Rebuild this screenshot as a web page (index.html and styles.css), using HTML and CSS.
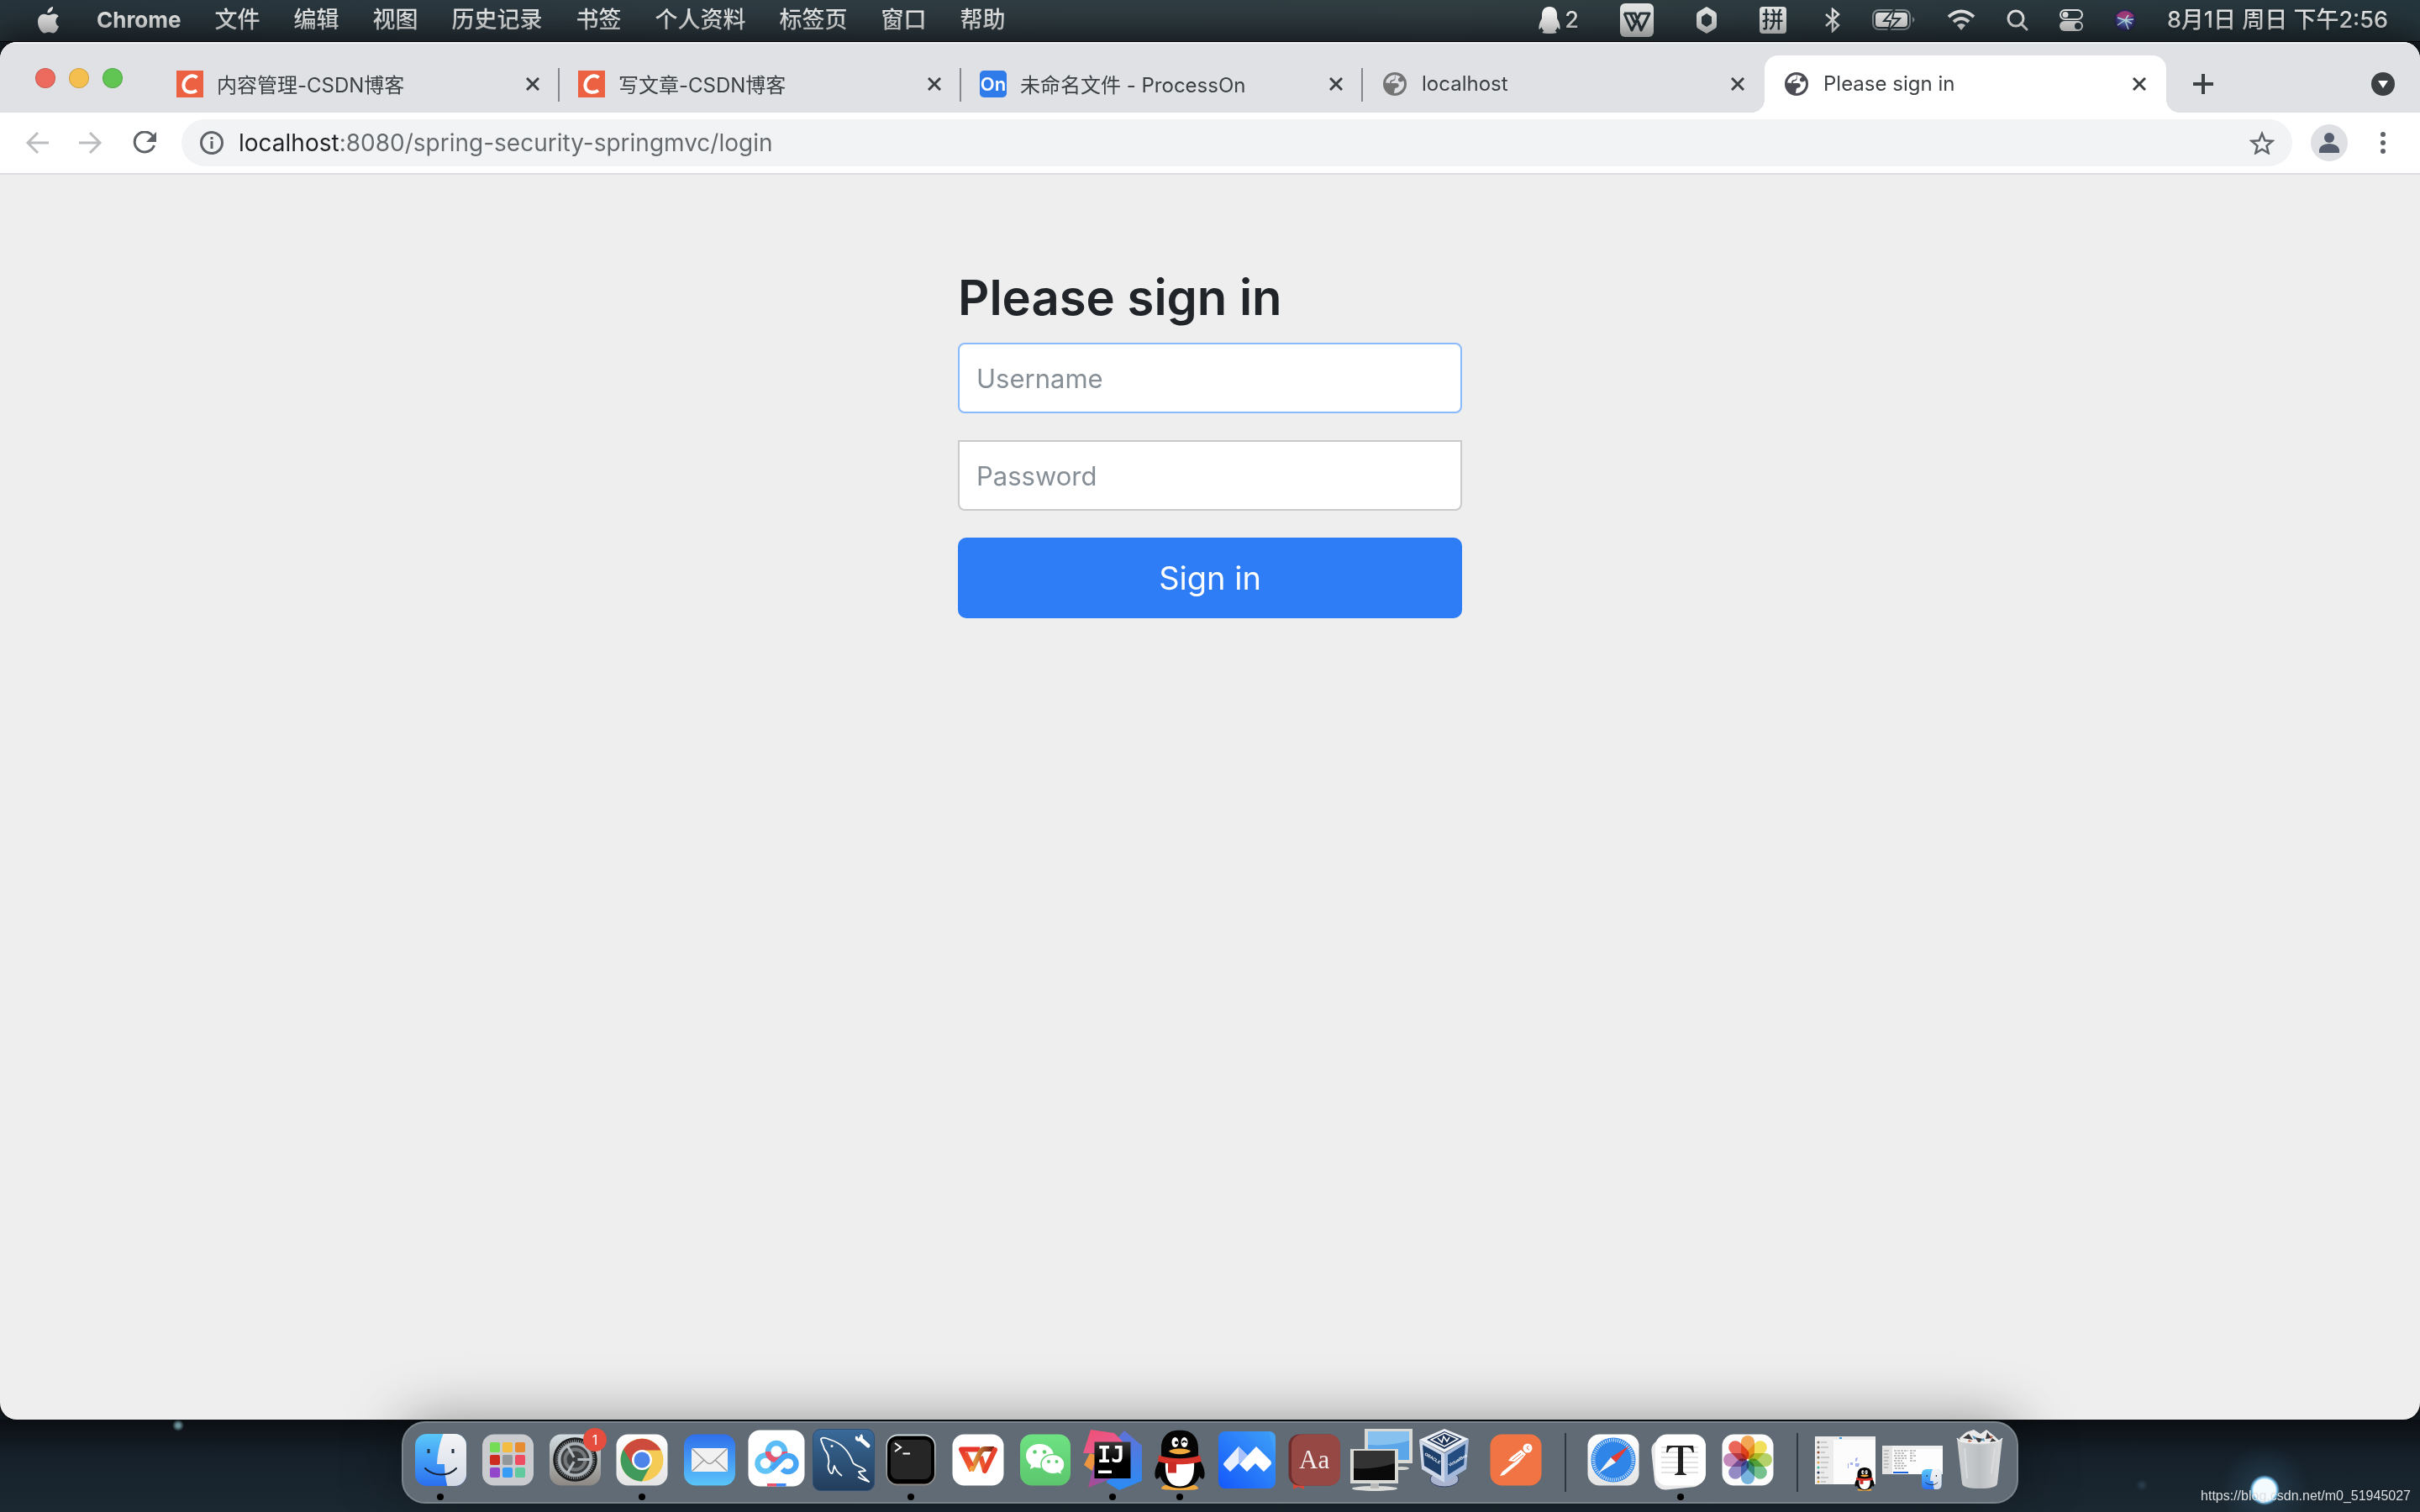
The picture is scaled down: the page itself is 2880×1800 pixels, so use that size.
FILE: index.html
```html
<!DOCTYPE html>
<html lang="zh-CN">
<head>
    <meta charset="UTF-8">
    <meta name="viewport" content="width=device-width, initial-scale=1.0">
    <title>Please sign in</title>
    <link rel="stylesheet" href="styles.css">
</head>
<body>

    <!-- Shared shapes and gradients -->
    <svg class="defs" width="0" height="0" aria-hidden="true">
        <defs>
            <linearGradient id="g-sky" x2="0" y2="1"><stop stop-color="#5ac8fa"/><stop offset="1" stop-color="#2a6ff0"/></linearGradient>
            <linearGradient id="g-mail" x2="0" y2="1"><stop stop-color="#2f6fec"/><stop offset="1" stop-color="#5ac5fa"/></linearGradient>
            <linearGradient id="g-face" x2="0" y2="1"><stop stop-color="#f4f4f6"/><stop offset="1" stop-color="#d3dae6"/></linearGradient>
            <linearGradient id="g-gray" x2="0" y2="1"><stop stop-color="#d2dde2"/><stop offset="1" stop-color="#8d8883"/></linearGradient>
            <linearGradient id="g-white" x2="0" y2="1"><stop stop-color="#ffffff"/><stop offset="1" stop-color="#e4e4e4"/></linearGradient>
            <linearGradient id="g-sql" x2="0" y2="1"><stop stop-color="#3a6a99"/><stop offset="1" stop-color="#223d5a"/></linearGradient>
            <linearGradient id="g-green" x2="0" y2="1"><stop stop-color="#6ee283"/><stop offset="1" stop-color="#5cc66d"/></linearGradient>
            <linearGradient id="g-wps" x2="0" y2="1"><stop stop-color="#e6352b"/><stop offset="1" stop-color="#f2692c"/></linearGradient>
            <linearGradient id="g-fold" x2="1" y2="0"><stop stop-color="#f5a742"/><stop offset="1" stop-color="#6e1613"/></linearGradient>
            <linearGradient id="g-blue" x1="0" y1="1" x2="1" y2="0"><stop stop-color="#1458fb"/><stop offset="1" stop-color="#3ea0f7"/></linearGradient>
            <linearGradient id="g-pink" x2="1" y2="1"><stop stop-color="#ef4f74"/><stop offset="1" stop-color="#e8609a"/></linearGradient>
            <linearGradient id="g-violet" x1="0" y1="1" x2="1" y2="0"><stop stop-color="#b14a8e"/><stop offset="1" stop-color="#6c61c9"/></linearGradient>
            <linearGradient id="g-ijblue" x2="0" y2="1"><stop stop-color="#5f72d8"/><stop offset="1" stop-color="#2a8cf5"/></linearGradient>
            <linearGradient id="g-black" x2="0" y2="1"><stop stop-color="#3a3a3a"/><stop offset=".5" stop-color="#000000"/></linearGradient>
            <linearGradient id="g-bin" x2="1" y2="0"><stop stop-color="#d8dadb"/><stop offset=".5" stop-color="#c3c5c7"/><stop offset="1" stop-color="#e4e5e6"/></linearGradient>
            <radialGradient id="g-siri"><stop stop-color="#6fb7e0"/><stop offset=".5" stop-color="#4a55a8"/><stop offset="1" stop-color="#27234f"/></radialGradient>
        </defs>

        <symbol id="close" viewBox="0 0 16 16"><path d="M1 1 15 15M15 1 1 15" stroke="#3c4043" stroke-width="3"/></symbol>

        <symbol id="globe" viewBox="0 0 28 28">
            <circle cx="14" cy="14" r="14" fill="currentColor"/>
            <path d="M8 13.500c0-3 .6-4.300 3.500-4.500 2.500-.2 2.500-2.200 2.300-3.500L14 3a11 11 0 0 0-11 9.500l4 .2z" fill="var(--tab)"/>
            <path d="M2.800 14.500A11.300 11.300 0 0 0 12 25v-2.500c-2 0-3-1-3-2.800 0-1.200.6-2.100 2-2.700z" fill="currentColor"/>
            <path d="M14.500 3v4.500c0 1.500-.6 2.500-2.600 3-1.700.4-2.200 1-2.200 2.500h6c2 0 3 .9 3 2.700 0 1.600-1 2.600-2.900 2.800-1.500.2-2 1-2.200 2.600L13 25c6.700 0 12-5 12-11 0-1.500-.3-3-.9-4.200-1.200 1.600-3.300 2.300-5 1.200-1.700-1-1.600-2.700-.3-4l1.900-2z" fill="var(--tab)"/>
        </symbol>

        <symbol id="csdn" viewBox="0 0 32 32">
            <path fill="#ec6142" d="M0 0h32v32H0z"/>
            <path d="M24.500 8.500C22 6 18.500 5.600 15 7.200 9 10 7 17.500 9.500 22c2.500 4.500 9.500 5 14.500 1.600" fill="none" stroke="#fff" stroke-width="4"/>
        </symbol>

        <symbol id="finder" viewBox="0 0 62 62">
            <clipPath id="finder-clip"><rect width="61" height="62" rx="14"/></clipPath>
            <g clip-path="url(#finder-clip)">
                <path fill="url(#g-sky)" d="M0 0h62v62H0z"/>
                <path fill="url(#g-face)" d="M33.500 0C29 11 26.500 24 26 36h9c0 8 1 17 3.300 26H62V0z"/>
                <path d="M16 18v5M45 18v5" stroke="#233140" stroke-width="3"/>
                <path d="M12 41c10 10 28 10 37 0" fill="none" stroke="#152030" stroke-width="2" stroke-linecap="round"/>
            </g>
        </symbol>

        <symbol id="qq" viewBox="0 0 60 72">
            <path d="M6 36C0 45-1 54 2 58c2 1 5-3 7-6M54 36c6 9 7 18 4 22-2 1-5-3-7-6" fill="#050505"/>
            <path d="M8 70c0-5 9-6 15-5h14c7-1 15 0 15 5-4 2-38 2-44 0z" fill="#f0a83c"/>
            <path d="M30 0C15 0 8 9 8 22v9c-3 7-4 14-2 22 3 11 11 16 24 16s21-5 24-16c2-8 1-15-2-22v-9C52 9 45 0 30 0z" fill="#050505"/>
            <path d="M13 38c-1 18 4 29 17 29s18-11 17-29z" fill="#fff"/>
            <path d="M5 30c16 5 34 5 49 0l2 7c-14 5-38 5-52 0z" fill="#d6342a"/>
            <path d="M16 38h10v13H16z" fill="#c92b25"/>
            <ellipse cx="24.500" cy="14.500" rx="4" ry="6" fill="#fff"/><ellipse cx="35.500" cy="14.500" rx="4" ry="6" fill="#fff"/>
            <circle cx="26" cy="15" r="2"/><path d="M33 15c2-3 4-2 5 0" fill="none" stroke="#050505" stroke-width="2"/>
            <path d="M17 25c5-4 21-4 26 0-5 5-21 5-26 0z" fill="#f0a83c"/>
        </symbol>
    </svg>

    <header class="menubar">
        <nav class="menus">
            <button class="menu apple" aria-label="Apple">
                <svg width="28" height="34" viewBox="0 0 28 34"><path fill="#eee" d="M19 1c.3 4-3 7.500-6.500 7.500C12 5 15.300 1.500 19 1zM26 24.500c-2 5-4.500 8-7 8-1.800 0-2.500-1.200-4.900-1.200s-3.300 1.200-5 1.200C5.300 32.500 1 25 1 19c0-6 3.700-9.300 7.500-9.300 2.300 0 4 1.400 5.800 1.400 1.700 0 3.500-1.500 6.200-1.500 2 0 4 1 5.200 2.800-4.800 2.900-4.200 9.900.3 12.100z"/></svg>
            </button>
            <button class="menu app-name">Chrome</button>
            <button class="menu">文件</button>
            <button class="menu">编辑</button>
            <button class="menu">视图</button>
            <button class="menu">历史记录</button>
            <button class="menu">书签</button>
            <button class="menu">个人资料</button>
            <button class="menu">标签页</button>
            <button class="menu">窗口</button>
            <button class="menu">帮助</button>
        </nav>
        <div class="status">
            <span class="qq-status">
                <svg width="28" height="34" viewBox="0 0 28 34"><path fill="#fff" d="M14 1C8 1 5 5 5 11v4c-3 5-4 9-3.500 13 1 0 2-1 3-3 .6 2 1.500 3.500 3 4.800-1 .5-2 1-2 2.200 3 1.300 14 1.300 17 0 0-1.200-1-1.700-2-2.200 1.500-1.300 2.400-2.800 3-4.800 1 2 2 3 3 3C27 24 26 20 23 15v-4C23 5 20 1 14 1z"/></svg>2</span>
            <svg width="40" height="40" viewBox="0 0 40 40"><rect width="40" height="40" rx="6" fill="#e9ebeb"/><path d="M5 12h13l7 20 10-20H24L14 32 5 12M12 12l7 14M20 18l5 12" fill="none" stroke="#2b383d" stroke-width="3" stroke-linejoin="round"/></svg>
            <svg width="24" height="32" viewBox="0 0 24 32"><path fill="#e9ebeb" fill-rule="evenodd" d="M12 0 22 6q2 1 2 4v12q0 3-2 4L12 32 2 26q-2-1-2-4V10q0-3 2-4zM12 8 6 12v8l6 4 6-4v-8z"/></svg>
            <span class="ime">拼</span>
            <svg width="20" height="30" viewBox="0 0 20 30"><path d="M2 8 17 21 10 28V2l7 6L2 22" fill="none" stroke="#eee" stroke-width="2.500"/></svg>
            <svg width="52" height="26" viewBox="0 0 52 26"><rect x="1" y="1" width="44" height="23" rx="7" fill="none" stroke="#8c9699" stroke-width="2"/><rect x="4" y="4" width="38" height="17" rx="4" fill="#eee"/><path d="M48 9q5 3.500 0 7z" fill="#8c9699"/><path d="m27-1-13 15h8l-3 12L33 11h-9z" fill="#eee" stroke="#2c3a40" stroke-width="2"/></svg>
            <svg width="34" height="26" viewBox="0 0 34 26"><g fill="none" stroke="#eee" stroke-width="4"><path d="M2 9q15-13 30 0"/><path d="M8 15q9-8 18 0"/></g><path d="m17 25-5-6q5-4 10 0z" fill="#eee"/></svg>
            <svg width="26" height="26" viewBox="0 0 26 26"><circle cx="11" cy="11" r="9" fill="none" stroke="#eee" stroke-width="3"/><path d="m17 17 7 7" stroke="#eee" stroke-width="3" stroke-linecap="round"/></svg>
            <svg width="28" height="28" viewBox="0 0 28 28"><rect x="1" y="2" width="26" height="11" rx="5.500" fill="none" stroke="#eee" stroke-width="2"/><circle cx="7" cy="7.500" r="3.500" fill="#eee"/><rect y="15" width="28" height="12" rx="6" fill="#eee"/><circle cx="22" cy="21" r="4" fill="#2b3a41"/></svg>
            <svg width="26" height="26" viewBox="0 0 26 26"><circle cx="13" cy="13" r="13" fill="url(#g-siri)"/><path d="M2 8Q13-4 24 8L13 12z" fill="#c33d7d" opacity=".8"/><path d="M13 13 4 10M13 13l10-1M13 13l4 11M13 13l-9 6M13 13l4-6M13 13l8 4" stroke="#d5f5fa" stroke-width="1.500"/></svg>
            <time class="clock">8月1日 周日 下午2:56</time>
        </div>
    </header>

    <main class="window">
        <div class="tab-strip">
            <div class="window-controls">
                <button class="circle red" aria-label="关闭"></button>
                <button class="circle yellow" aria-label="最小化"></button>
                <button class="circle green" aria-label="缩放"></button>
            </div>
            <div class="tab">
                <svg class="favicon"><use href="#csdn"/></svg>
                <span class="tab-title">内容管理-CSDN博客</span>
                <button class="close-btn" aria-label="关闭标签页"><svg width="16" height="16"><use href="#close"/></svg></button>
            </div>
            <div class="tab">
                <svg class="favicon"><use href="#csdn"/></svg>
                <span class="tab-title">写文章-CSDN博客</span>
                <button class="close-btn" aria-label="关闭标签页"><svg width="16" height="16"><use href="#close"/></svg></button>
            </div>
            <div class="tab">
                <span class="favicon on-icon">On</span>
                <span class="tab-title">未命名文件 - ProcessOn</span>
                <button class="close-btn" aria-label="关闭标签页"><svg width="16" height="16"><use href="#close"/></svg></button>
            </div>
            <div class="tab last">
                <span class="favicon"><svg width="28" height="28"><use href="#globe"/></svg></span>
                <span class="tab-title">localhost</span>
                <button class="close-btn" aria-label="关闭标签页"><svg width="16" height="16"><use href="#close"/></svg></button>
            </div>
            <div class="tab active">
                <span class="favicon"><svg width="28" height="28"><use href="#globe"/></svg></span>
                <span class="tab-title">Please sign in</span>
                <button class="close-btn" aria-label="关闭标签页"><svg width="16" height="16"><use href="#close"/></svg></button>
            </div>
            <button class="new-tab" aria-label="新标签页"><svg width="24" height="24"><path d="M12 0v24M0 12h24" stroke="#3c4043" stroke-width="4"/></svg></button>
            <button class="tab-search" aria-label="搜索标签页"><svg width="28" height="28"><circle cx="14" cy="14" r="14" fill="#3c4043"/><path d="M8 10h12l-6 9z" fill="#fff"/></svg></button>
        </div>

        <div class="toolbar">
            <button class="tool" aria-label="后退"><svg width="28" height="28"><path d="M28 14H3M15 2 3 14l12 12" fill="none" stroke="#babcbe" stroke-width="3"/></svg></button>
            <button class="tool" aria-label="前进"><svg width="28" height="28"><path d="M0 14h25M13 2l12 12-12 12" fill="none" stroke="#babcbe" stroke-width="3"/></svg></button>
            <button class="tool" aria-label="刷新"><svg width="28" height="28"><path d="M24 6A12 12 0 1 0 25.500 17" fill="none" stroke="#5f6368" stroke-width="3"/><path d="M28 1v12H16z" fill="#5f6368"/></svg></button>
            <div class="omnibox">
                <svg width="28" height="28"><circle cx="14" cy="14" r="12.500" fill="none" stroke="#5f6368" stroke-width="3"/><path d="M14 7v3M14 12v9" stroke="#5f6368" stroke-width="3"/></svg>
                <input class="url" type="text" aria-label="地址" value="localhost:8080/spring-security-springmvc/login">
                <button class="star" aria-label="添加书签"><svg width="30" height="28" viewBox="0 0 30 28"><path d="m15 3 3.400 8.200 8.800.7-6.700 5.700 2.100 8.600L15 21.600l-7.600 4.600 2.100-8.600-6.700-5.700 8.800-.7z" fill="none" stroke="#5f6368" stroke-width="2.500"/></svg></button>
            </div>
            <button class="avatar" aria-label="个人资料"><svg width="44" height="44"><circle cx="22" cy="22" r="22" fill="#dee0e4"/><circle cx="22" cy="16" r="6" fill="#555d6e"/><path d="M10 34v-4q1-6 12-7 11 1 12 7v4z" fill="#555d6e"/></svg></button>
            <button class="more" aria-label="更多"><svg width="8" height="28"><g fill="#5f6368"><circle cx="4" cy="4" r="3"/><circle cx="4" cy="14" r="3"/><circle cx="4" cy="24" r="3"/></g></svg></button>
        </div>

        <section class="page">
            <form class="form-signin">
                <h2>Please sign in</h2>
                <input id="username" class="form-control focused" type="text" placeholder="Username" aria-label="Username">
                <input id="password" class="form-control" type="password" placeholder="Password" aria-label="Password">
                <button class="btn-primary" type="button">Sign in</button>
            </form>
        </section>
    </main>

    <footer class="desktop">
        <div class="dock">
            <button class="app running" aria-label="访达"><svg viewBox="0 0 80 98"><use href="#finder" x="10" y="15" width="62" height="62"/></svg></button>

            <button class="app" aria-label="启动台"><svg viewBox="0 0 80 98">
                <rect x="10" y="15.500" width="61" height="61" rx="14" fill="#c9cbcf"/>
                <rect x="19" y="25" width="12" height="12" rx="2" fill="#74dc55"/><rect x="34" y="25" width="12" height="12" rx="2" fill="#f3bd41"/><rect x="49" y="25" width="12" height="12" rx="2" fill="#e88c32"/>
                <rect x="19" y="40" width="12" height="12" rx="2" fill="#cc2c20"/><rect x="34" y="40" width="12" height="12" rx="2" fill="#929799"/><rect x="49" y="40" width="12" height="12" rx="2" fill="#ed4c61"/>
                <rect x="19" y="55" width="12" height="12" rx="2" fill="#9348cb"/><rect x="34" y="55" width="12" height="12" rx="2" fill="#369cf5"/><rect x="49" y="55" width="12" height="12" rx="2" fill="#60c99d"/>
            </svg></button>

            <button class="app" aria-label="系统偏好设置"><svg viewBox="0 0 80 98">
                <rect x="10" y="15.500" width="61" height="61" rx="14" fill="url(#g-gray)"/>
                <circle cx="40.500" cy="45.500" r="25" fill="#8e9396" stroke="#1c1d1e" stroke-width="2.500"/>
                <circle cx="40.500" cy="45.500" r="22.500" fill="none" stroke="#1c1d1e" stroke-width="3" stroke-dasharray="1.500 1"/>
                <circle cx="40.500" cy="45.500" r="18.500" fill="#3c3e40" stroke="#aeb5ba" stroke-width="3"/>
                <circle cx="40.500" cy="45.500" r="12" fill="none" stroke="#74787b" stroke-width="4"/>
                <path d="M40.500 45.500h18M40.500 45.500l-9-16M40.500 45.500l-9 16" stroke="#b4bbc0" stroke-width="3"/>
                <circle cx="40.500" cy="45.500" r="3" fill="#3a3b3c"/>
            </svg><span class="badge">1</span></button>

            <button class="app running" aria-label="Chrome"><svg viewBox="0 0 80 98">
                <rect x="9.500" y="15.500" width="61" height="61" rx="14" fill="url(#g-white)"/>
                <circle cx="40" cy="46" r="25.500" fill="#f6cb55"/>
                <path d="M40 46 18 33.300A25.500 25.500 0 0 0 40 71.500L51 51z" fill="#3f9a5c"/>
                <path d="M40 46 29 52.500 18 33.300A25.500 25.500 0 0 1 62.500 34.500H40z" fill="#cc4b3d"/>
                <circle cx="40" cy="46" r="12" fill="#fff"/><circle cx="40" cy="46" r="9.500" fill="#4d84ea"/>
            </svg></button>

            <button class="app" aria-label="邮件"><svg viewBox="0 0 80 98">
                <rect x="10" y="15.500" width="61" height="61" rx="14" fill="url(#g-mail)"/>
                <rect x="19" y="32" width="43" height="28" rx="2" fill="#f1f1f1"/>
                <path d="m20 59 14-13M61 59 47 46M20 33l17 16q3.500 3 7 0l17-16" fill="none" stroke="#999" stroke-width="1.500"/>
            </svg></button>

            <button class="app" aria-label="百度网盘"><svg viewBox="0 0 80 98">
                <rect x="6.500" y="10.500" width="67" height="67" rx="14" fill="#fff"/>
                <g fill="none" stroke-width="6.500"><circle cx="27" cy="50" r="9.500" stroke="#5fc3f5"/><circle cx="40" cy="36" r="10" stroke="#5cbcf5"/><path d="M30 36a10 10 0 0 0 20 0" stroke="#e9546d"/><path d="M34 57 47 44a9.500 9.500 0 1 1 0 13" stroke="#47a5f6"/></g>
                <path fill="#e9546d" d="M29 74h11v3.500H29z"/><path fill="#3d86f5" d="M40 74h11.500v3.500H40z"/>
            </svg></button>

            <button class="app" aria-label="MySQL Workbench"><svg viewBox="0 0 80 98">
                <rect x="3.500" y="9.500" width="73" height="73" rx="9" fill="url(#g-sql)" stroke="#2c5079"/>
                <path d="M22 45c2 6-3 7 1 14 1 3 3 4 4 2 1-4 1-6 2-8 2 6 4 8 9 12M22 45c0-8-3-8-5-12-1-5-4-8-4-12 2-3 7-1 11 1 14 4 22 13 27 27 1 4 13 5 15 10-3 1-6 0-8 1 2 4 8 8 12 12-4-2-9-3-13-6" fill="none" stroke="#fff" stroke-width="1.800" stroke-linejoin="round"/>
                <circle cx="26" cy="29.500" r="1.500" fill="#fff"/>
                <path d="m60 21 9 8" stroke="#fff" stroke-width="5" stroke-linecap="round"/><path d="M55.500 18q-1 5 3.500 4 4-2 1.500-6" fill="none" stroke="#fff" stroke-width="3"/>
            </svg></button>

            <button class="app running" aria-label="终端"><svg viewBox="0 0 80 98">
                <rect x="10.500" y="15.500" width="59" height="61" rx="14" fill="url(#g-gray)"/>
                <rect x="12" y="17.500" width="56" height="57" rx="12" fill="#000"/><rect x="16" y="22" width="48" height="47" rx="8" fill="#262626"/>
                <path d="m21 26 7 5-7 5M30.500 38.500H39" fill="none" stroke="#fff" stroke-width="2"/>
            </svg></button>

            <button class="app" aria-label="WPS"><svg viewBox="0 0 80 98">
                <rect x="9.500" y="15.500" width="61" height="61" rx="14" fill="#fff"/>
                <path d="M42 33.500H20L32.500 59M43 42l5 17" fill="none" stroke="url(#g-wps)" stroke-width="6" stroke-linejoin="round"/>
                <path d="m32 59 11-23q2-3 5-3h11" fill="none" stroke="url(#g-fold)" stroke-width="6"/>
                <path d="m26 37 8 16" stroke="#ec5030" stroke-width="3"/>
                <path d="m48 59 12-25" stroke="#e6412b" stroke-width="6" stroke-linecap="round"/>
            </svg></button>

            <button class="app" aria-label="微信"><svg viewBox="0 0 80 98">
                <rect x="10" y="15.500" width="60" height="61" rx="14" fill="url(#g-green)"/>
                <path d="M33 27c9.500 0 17 6 17 14s-7.500 14.500-17 14.500q-3 0-6-1l-5 2.500 1-5q-6-4-6-11c0-8 7-14 16-14z" fill="#fff"/>
                <path d="M49 39.500c8 0 14 5 14 11.700q0 5.300-4 8.500l1 4-5-2q-3 1-6 1c-8 0-14-5-14-11.500s6-11.700 14-11.700z" fill="#fff" stroke="#63d075" stroke-width="1.500"/>
                <g fill="#5fcc70"><circle cx="27.500" cy="36.500" r="2.300"/><circle cx="39" cy="36.500" r="2.300"/><circle cx="44" cy="48" r="2"/><circle cx="53.500" cy="48" r="2"/></g>
            </svg></button>

            <button class="app running" aria-label="IntelliJ IDEA"><svg viewBox="0 0 80 98">
                <path d="m54 11 21 18v42L48 82 33 73l2-40z" fill="url(#g-ijblue)"/>
                <path d="m14 10 28 4 17 17-41 7H5z" fill="url(#g-pink)"/><path d="m13 38-7 14 14 10V40z" fill="#ed9440"/><path d="m18 51-7 28 36-14z" fill="url(#g-violet)"/>
                <path fill="url(#g-black)" d="M18.500 24.500h43V68h-43z"/><path fill="#fff" d="M23 58.500h16V62H23z"/>
                <text x="22" y="49" class="ij">IJ</text>
            </svg></button>

            <button class="app running" aria-label="QQ"><svg viewBox="0 0 80 98"><use href="#qq" x="10" y="10.500" width="60" height="72"/></svg></button>

            <button class="app" aria-label="腾讯会议"><svg viewBox="0 0 80 98">
                <rect x="6" y="12" width="68" height="68" rx="8" fill="url(#g-blue)"/><path d="M74 40V20q0-8-8-8Z" fill="#49a8f7" opacity=".5"/>
                <path d="m30 30 10 10-20 20-7-7q-2-2 0-4z" fill="#e9effd"/><path d="m30 30 11 11-11 10z" fill="#a9c2fb"/>
                <path d="m51 30 17 17q2 3 0 5l-8 8-10-10-10 10-9-9z" fill="#fff"/>
            </svg></button>

            <button class="app" aria-label="词典"><svg viewBox="0 0 80 98">
                <path d="M15 70v11l6-3 7 3V70z" fill="#d4483a"/><rect x="9.500" y="15.500" width="60" height="61" rx="13" fill="#6f2e2e"/><rect x="13" y="15.500" width="58" height="61" rx="13" fill="#964845"/>
                <text x="22" y="56" class="aa">Aa</text>
            </svg></button>

            <button class="app" aria-label="屏幕共享"><svg viewBox="0 0 80 98">
                <ellipse cx="64" cy="56" rx="9" ry="2" fill="#d5d5d2"/>
                <path fill="#d9dad6" d="M20 9h57v41H20z"/><path fill="#5ba6e8" d="M24 12h49v34H24z"/><path fill="#a3d4f4" d="M24 12h49v11Q50 30 24 28z" opacity=".6"/>
                <ellipse cx="32" cy="80" rx="27" ry="3" fill="#dcddda"/><path fill="#b9bab7" d="M27 72h10v8H27z"/>
                <path fill="#d9dad6" d="M3 33h57v41H3z"/><path fill="#0a0a0a" d="M7 35h49v35H7z"/><path fill="#333" d="M7 35h49v15Q30 58 7 56z"/>
            </svg></button>

            <button class="app" aria-label="VirtualBox"><svg viewBox="0 0 80 98">
                <ellipse cx="35" cy="69" rx="17" ry="9" fill="#aab4ce" stroke="#34466e"/>
                <path d="m35 9 29 12-29 16L5 22z" fill="#edf0f5"/><path d="M5 22l30 16v35L8 57z" fill="#ced8e8"/><path d="M64 21 35 38v35l26-16z" fill="#a4b8da"/>
                <path d="m35 12 21 9-21 12-21-11z" fill="#1d3358"/><path d="m9 28 22 12v25L11 53z" fill="#1d3f6a"/><path d="M60 27 39 40v24l19-12z" fill="#234d80"/>
                <path d="m35 14 16 7-16 9-16-8zM27 20l5 5 2-7 4 6 3-5" fill="none" stroke="#fff" stroke-width="1.500"/>
                <text x="0" y="0" class="vb" transform="translate(11 40) rotate(31)">ORACLE</text><text x="0" y="0" class="vb" transform="translate(41 54) rotate(-30)">VirtualBox</text>
            </svg></button>

            <button class="app" aria-label="Postman"><svg viewBox="0 0 80 98">
                <rect x="9.500" y="15.500" width="61" height="61" rx="14" fill="#f07444"/>
                <circle cx="54" cy="32" r="5.500" fill="#fff"/><path d="m46 34 6 5-9 11-17 14-5 1 3-5 15-12-8-1 3-4z" fill="#fff"/><path d="m36 46 10-8M38 49l11-9M55 29l-2 3 3 2" fill="none" stroke="#f07444"/>
            </svg></button>

            <span class="divider"></span>

            <button class="app" aria-label="Safari"><svg viewBox="0 0 80 98">
                <rect x="9.500" y="15.500" width="61" height="61" rx="14" fill="url(#g-white)"/><circle cx="40" cy="46" r="26.500" fill="#2f86e8"/>
                <circle cx="40" cy="46" r="23.500" fill="none" stroke="#d5e9fb" stroke-width="4" stroke-dasharray="1 1.500"/>
                <path d="m59 29-16 20-6-6z" fill="#e43d36"/><path d="m22 62 15-19 6 6z" fill="#f3f3f3"/>
            </svg></button>

            <button class="app running" aria-label="Typora"><svg viewBox="0 0 80 98">
                <rect x="7" y="20" width="58" height="60" rx="13" fill="#e9e9e9" transform="rotate(-6 36 50)"/><rect x="10" y="15.500" width="60" height="61" rx="14" fill="#fff"/>
                <path d="M17 31h44M17 37h44M17 43h44M17 49h44M17 55h44M17 61h44" stroke="#e3e3e3" stroke-width="2"/>
                <path d="M24 29h31l1 8h-2c-1-4-3-6-7-6h-4v28c0 3 2 3 4 4v1H33v-1c2-1 4-1 4-4V31h-5c-4 0-6 2-7 6h-2z" fill="#222"/>
            </svg></button>

            <button class="app" aria-label="照片"><svg viewBox="0 0 80 98">
                <rect x="9.500" y="15.500" width="61" height="61" rx="14" fill="#fcfcfc"/>
                <g class="petals"><rect x="32" y="17" width="16" height="28" rx="8" fill="#f29a36"/><rect x="32" y="17" width="16" height="28" rx="8" fill="#f2dc3d" transform="rotate(45 40 46)"/><rect x="32" y="17" width="16" height="28" rx="8" fill="#aacd50" transform="rotate(90 40 46)"/><rect x="32" y="17" width="16" height="28" rx="8" fill="#5eba7b" transform="rotate(135 40 46)"/><rect x="32" y="17" width="16" height="28" rx="8" fill="#60a8da" transform="rotate(180 40 46)"/><rect x="32" y="17" width="16" height="28" rx="8" fill="#8379bf" transform="rotate(225 40 46)"/><rect x="32" y="17" width="16" height="28" rx="8" fill="#bd77b2" transform="rotate(270 40 46)"/><rect x="32" y="17" width="16" height="28" rx="8" fill="#ea4c3d" transform="rotate(315 40 46)"/></g>
            </svg></button>

            <span class="divider"></span>

            <button class="app" aria-label="QQ 窗口"><svg viewBox="0 0 80 98">
                <path fill="#fcfcfc" d="M4 18h72v57H4z"/><path fill="#ececec" d="M4 18h72v4H4zM5 22h21v53H5z"/>
                <g fill="#84776f"><circle cx="8" cy="25" r="1.500"/><circle cx="8" cy="31" r="1.500"/><circle cx="8" cy="37" r="1.500" fill="#9b4b31"/><circle cx="8" cy="43" r="1.500"/><circle cx="8" cy="49" r="1.500" fill="#dba453"/><circle cx="8" cy="55" r="1.500" fill="#43b899"/><circle cx="8" cy="61" r="1.500" fill="#26355a"/><circle cx="8" cy="67" r="1.500"/><circle cx="8" cy="72" r="1.500" fill="#e5a63f"/></g>
                <path d="M11 25h7M11 31h9M11 37h5M11 43h10M11 49h9M11 55h8M11 61h4M11 67h9M11 72h6" stroke="#a8a8a8"/>
                <path d="m52 44 3-1-1 4-2 1zM52 50h5l-1 4h-4zM46 49h3v3h-3zM43 50h1v6h-1z" fill="#a6b1ea"/><path d="M33 20h3" stroke="#3497e3" stroke-width="2"/>
                <use href="#qq" x="51" y="55" width="24" height="28"/>
            </svg></button>

            <button class="app" aria-label="访达窗口"><svg viewBox="0 0 80 98">
                <path fill="#fdfdfd" d="M4 29h72v34H4z"/><path fill="#e4e4e4" d="M4 29h12v34H4z"/><path fill="#f1f1f1" d="M16 29h60v4H16z"/>
                <path d="M18 35h17M19 38h11M18 41h16M19 44h14M18 47h10M19 50h12M18 53h15M19 56h12M37 35h8M37 38h5M37 41h8M37 44h4M37 47h7" stroke="#888" stroke-dasharray="3 1"/>
                <path d="M6 35h6M6 39h5M6 43h6M6 47h5M6 51h6M6 55h5" stroke="#999"/><path fill="#1d61d9" d="M17 60h18v2H17z"/>
                <use href="#finder" x="51" y="57" width="24" height="24"/>
            </svg></button>

            <button class="app" aria-label="废纸篓"><svg viewBox="0 0 80 98">
                <path d="m16 20 8-7 9-3 8 5 7-5 10 8 6 6-24 5-23-4z" fill="#e9e9e9"/><path d="m20 20 7-5 5 7zM34 19l5 7 5-5zM49 13l5 7-7 1zM55 20l5 4-8 1z" fill="#3b3b3f"/><path d="m31 17 5 2-2 3zM41 22l4-2 1 4z" fill="#5092b8"/><path d="m27 22 4 2-5 1zM52 17l4 1-3 3z" fill="#b85a3e"/>
                <path d="M13 20q3 6 27 6t27-6l-6 54q-1 6-21 6t-21-6z" fill="url(#g-bin)" opacity=".93"/><path d="M13 20q3 6 27 6t27-6" fill="none" stroke="#f4f4f4" stroke-width="1.500"/>
                <path d="m22 32 3 36M58 32l-4 30" fill="none" stroke="#dfe0e1" stroke-width="2" opacity=".7"/>
            </svg></button>
        </div>
        <span class="watermark">https://blog.csdn.net/m0_51945027</span>
    </footer>

</body>
</html>
```

FILE: styles.css
```css
* {
    box-sizing: border-box;
}
body {
    margin: 0;
    min-height: 100vh;
    display: flex;
    flex-direction: column;
    font-family: Inter, "Noto Sans CJK SC", sans-serif;
    background-color: #18242c;
}
button {
    padding: 0;
    border: 0;
    background: none;
    color: inherit;
    font: inherit;
    display: flex;
    align-items: center;
    justify-content: center;
}
svg {
    display: block;
    flex: none;
}
.defs {
    position: absolute;
}

/* Menu bar */
.menubar {
    height: 50px;
    flex: none;
    display: flex;
    align-items: center;
    justify-content: space-between;
    padding: 0 38px 2px 44px;
    color: #eeefef;
    font-size: 27px;
    font-weight: 500;
    line-height: 40px;
    background: linear-gradient(90deg, #27343b, #2f3c43 30%, #313e43 60%, #26363d);
    border-bottom: 1px solid #000;
    text-shadow: 0 2px 4px rgba(0, 0, 0, 0.3);
}
.menus {
    display: flex;
    gap: 40px;
}
.menu.apple {
    margin-right: 3px;
}
.menu.app-name {
    font-size: 26px;
    font-weight: 700;
}
.status {
    display: flex;
    align-items: center;
    gap: 37px;
}
.qq-status {
    display: flex;
    align-items: center;
    gap: 4px;
    margin-right: 12px;
}
.status > svg:nth-child(2),
.status > svg:nth-child(3) {
    margin-right: 14px;
}
.ime {
    width: 32px;
    height: 32px;
    margin-right: 8px;
    border-radius: 4px;
    background: #e9ebeb;
    color: #28353b;
    font-size: 26px;
    line-height: 31px;
    text-align: center;
    text-shadow: none;
}
.clock {
    font-size: 27px;
    white-space: nowrap;
}

/* Browser window */
.window {
    flex: 1;
    display: flex;
    flex-direction: column;
    overflow: hidden;
    border-radius: 20px;
    background: #eee;
    box-shadow: 0 0 0 1px #000, 0 0 40px 12px rgba(0, 0, 0, 0.6);
}
.tab-strip {
    height: 84px;
    flex: none;
    display: flex;
    align-items: flex-end;
    background: #dfe1e5;
    border-top: 2px solid #f1f2f3;
    padding-right: 30px;
}
.window-controls {
    display: flex;
    gap: 16px;
    width: 188px;
    padding-left: 42px;
    align-self: center;
}
.circle {
    width: 24px;
    height: 24px;
    border-radius: 50%;
    border: 1px solid rgba(0, 0, 0, 0.15);
}
.circle.red { background-color: #ed6a5e; }
.circle.yellow { background-color: #f5bf4f; }
.circle.green { background-color: #61c554; }

.tab {
    --tab: #dfe1e5;
    flex: 0 1 478px;
    height: 68px;
    display: flex;
    align-items: center;
    gap: 16px;
    padding: 0 24px 0 22px;
    position: relative;
    color: #3c4043;
    font-size: 24px;
}
.tab:not(.active):not(.last)::after {
    content: "";
    position: absolute;
    right: 0;
    top: 15px;
    width: 2px;
    height: 40px;
    background: #85888c;
}
.tab.active {
    --tab: #fff;
    background: #fff;
    border-radius: 16px 16px 0 0;
}
.tab.active::before,
.tab.active::after {
    content: "";
    position: absolute;
    bottom: 0;
    width: 16px;
    height: 16px;
}
.tab.active::before {
    left: -16px;
    background: radial-gradient(circle at 0 0, #dfe1e5 16px, #fff 16px);
}
.tab.active::after {
    right: -16px;
    background: radial-gradient(circle at 100% 0, #dfe1e5 16px, #fff 16px);
}
.favicon {
    width: 32px;
    height: 32px;
    flex: none;
    display: flex;
    align-items: center;
    justify-content: center;
    color: #747474;
}
.active .favicon {
    color: #4b4c54;
}
.on-icon {
    border-radius: 5px;
    background: #2f7be9;
    color: #fff;
    font-size: 22px;
    font-weight: 600;
}
.tab-title {
    flex: 1;
    padding-bottom: 2px;
    white-space: nowrap;
    overflow: hidden;
}
.new-tab {
    height: 68px;
    margin-left: 32px;
}
.tab-search {
    height: 68px;
    margin-left: auto;
}

/* Toolbar */
.toolbar {
    height: 74px;
    flex: none;
    display: flex;
    align-items: center;
    background: #fff;
    border-bottom: 2px solid #dcdde1;
    padding: 0 40px 0 12px;
}
.tool {
    width: 64px;
    height: 56px;
}
.omnibox {
    flex: 1;
    height: 56px;
    display: flex;
    align-items: center;
    gap: 18px;
    margin-left: 12px;
    padding: 0 21px 0 22px;
    border-radius: 28px;
    background: #f1f3f4;
}
.url {
    flex: 1;
    padding: 0;
    border: 0;
    outline: 0;
    font-family: inherit;
    font-size: 28px;
    line-height: 40px;
    color: #65686b;
    /* host part is darker than the path */
    background: linear-gradient(90deg, #202124 121px, #65686b 121px);
    -webkit-background-clip: text;
    background-clip: text;
    -webkit-text-fill-color: transparent;
}
.avatar {
    margin-left: 22px;
}
.more {
    margin-left: 38px;
}

/* Sign in page */
.page {
    flex: 1;
    padding: 108px 30px 0;
    color: #212529;
}
.form-signin {
    width: 100%;
    max-width: 600px;
    margin: 0 auto;
}
.form-signin h2 {
    margin: 0 0 16px;
    font-size: 58px;
    font-weight: 600;
    line-height: 76px;
}
.form-control {
    display: block;
    width: 100%;
    height: 84px;
    margin-bottom: 32px;
    padding: 0 20px;
    border: 2px solid #c9cacb;
    border-radius: 0 0 8px 8px;
    outline: 0;
    background: #fff;
    font-family: inherit;
    font-size: 31px;
}
.form-control.focused {
    border-color: #89bafb;
    border-radius: 8px;
}
.form-control::placeholder {
    color: #868e96;
    opacity: 1;
}
.btn-primary {
    width: 100%;
    height: 96px;
    border-radius: 10px;
    background: #2e7cf6;
    color: #fff;
    font-size: 38px;
}

/* Desktop and dock */
.desktop {
    flex: none;
    display: flex;
    justify-content: center;
    padding: 2px 0 10px;
    position: relative;
    background:
        radial-gradient(circle at 2695px 84px, #f4fbff 13px, #6eb9e5 15px, rgba(45, 78, 100, 0.4) 18px, transparent 54px),
        radial-gradient(circle at 212px 7px, #6d939b 2px, transparent 7px),
        radial-gradient(circle at 2549px 78px, #263a49 2px, transparent 7px),
        linear-gradient(#0b0f13, #15202a 40%, #1b2831);
}
.dock {
    display: flex;
    padding: 0 4px;
    border: 2px solid #7b858d;
    border-radius: 28px;
    background: #606b75;
    box-shadow: 0 0 70px rgba(0, 0, 0, 0.4);
    position: relative;
}
.app {
    width: 80px;
    height: 94px;
    position: relative;
}
.app svg {
    width: 80px;
    height: 98px;
}
.app.running::after {
    content: "";
    position: absolute;
    left: 36px;
    bottom: 2px;
    width: 8px;
    height: 8px;
    border-radius: 50%;
    background: #000;
}
.badge {
    position: absolute;
    left: 50px;
    top: 6px;
    width: 28px;
    height: 28px;
    border-radius: 50%;
    background: #e54d3f;
    color: #fff;
    font-size: 16px;
    line-height: 28px;
}
.divider {
    width: 2px;
    margin: 12px 16px 12px 18px;
    background: #2c3943;
}
.ij {
    font: 700 27px "DejaVu Sans Mono", monospace;
    fill: #fff;
}
.aa {
    font: 31px "Liberation Serif", serif;
    fill: #f4eeee;
}
.vb {
    font: 700 5px "Liberation Sans", sans-serif;
    fill: #fff;
}
.petals rect {
    opacity: 0.85;
    mix-blend-mode: multiply;
}
.watermark {
    position: absolute;
    right: 11px;
    bottom: 9px;
    color: #dcdfe1;
    font-family: "Liberation Sans", sans-serif;
    font-size: 16px;
    line-height: 20px;
}
```
